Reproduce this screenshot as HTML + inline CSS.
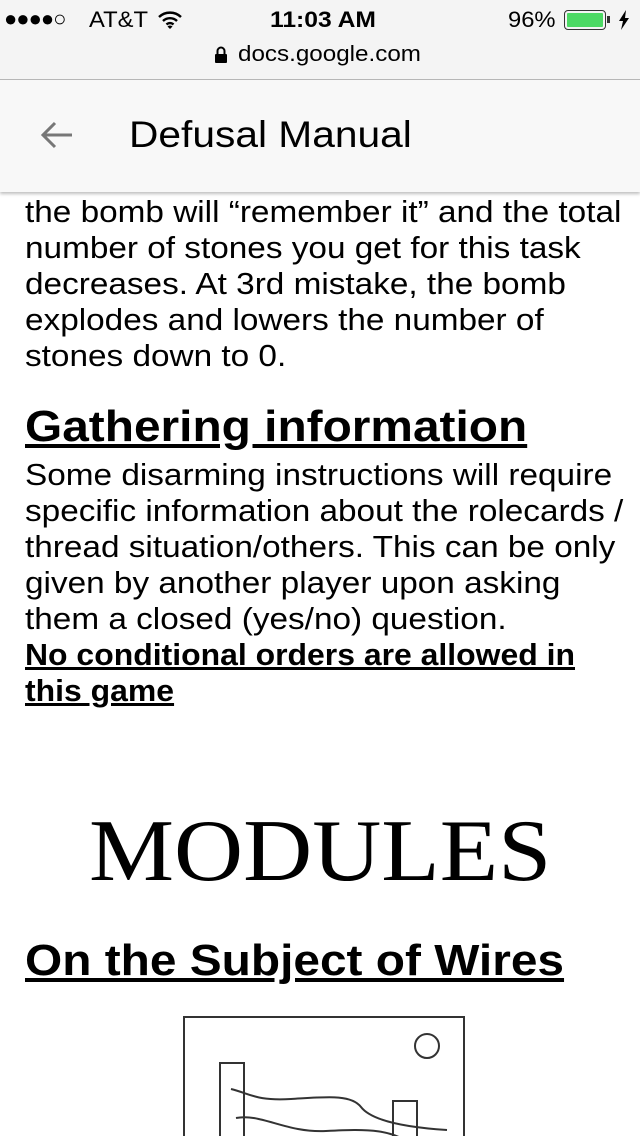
<!DOCTYPE html>
<html><head><meta charset="utf-8"><style>
*{margin:0;padding:0;box-sizing:border-box}
body{width:640px;height:1136px;overflow:hidden;background:#fff;font-family:"Liberation Sans",sans-serif;color:#000;position:relative}
.sb{position:absolute;left:0;top:0;width:640px;height:80px;background:#f4f4f4;border-bottom:1px solid #b8b8b8}
.hd{position:absolute;left:0;top:80px;width:640px;height:112px;background:#f8f8f8;box-shadow:0 2px 3px rgba(0,0,0,.25);z-index:2}
.t{position:absolute;white-space:nowrap;transform-origin:0 0}
.p{position:absolute;left:25px;font-size:31px;line-height:36px;white-space:nowrap;transform:scaleX(1.075);transform-origin:0 0}
.b{position:absolute;left:25px;font-size:31px;line-height:36px;white-space:nowrap;font-weight:bold;text-decoration:underline;transform:scaleX(1.03);transform-origin:0 0}
</style></head><body>
<div class="sb">
<div class="t" style="left:4px;top:6px;font-size:22px;letter-spacing:-1px">●●●●○</div>
<div class="t" style="left:89px;top:7px;font-size:22px;transform:scaleX(1.08)">AT&amp;T</div>
<svg class="t" style="left:157px;top:10px" width="26" height="20" viewBox="0 0 26 20"><path d="M2 7a16 16 0 0 1 22 0M6 11a10 10 0 0 1 14 0M9.5 14.5a5 5 0 0 1 7 0" stroke="#000" stroke-width="2.4" fill="none"/><path d="M13 19l-2.5-2.5a3.5 3.5 0 0 1 5 0z" fill="#000"/></svg>
<div class="t" style="left:270px;top:7px;font-size:22px;font-weight:bold;transform:scaleX(1.12)">11:03 AM</div>
<div class="t" style="left:508px;top:7px;font-size:22px;transform:scaleX(1.08)">96%</div>
<div class="t" style="left:564px;top:10px;width:42px;height:20px;border:1.5px solid #333;border-radius:4px;padding:2px"><div style="width:100%;height:100%;background:#4cd964;border-radius:1px"></div></div>
<div class="t" style="left:607px;top:16px;width:3px;height:7px;background:#333"></div>
<svg class="t" style="left:617px;top:10px" width="14" height="20"><path d="M9 0L2 11h4l-2 9 8-12H8z" fill="#000"/></svg>
<svg class="t" style="left:214px;top:46px" width="14" height="18"><path d="M3.5 8V5a3.5 3.5 0 0 1 7 0v3" stroke="#000" stroke-width="2" fill="none"/><rect x="1" y="8" width="12" height="9" rx="1" fill="#000"/></svg>
<div class="t" style="left:238px;top:41px;font-size:22px;transform:scaleX(1.1)">docs.google.com</div>
</div>
<div class="hd">
<svg class="t" style="left:38px;top:40px" width="36" height="30"><path d="M34 15H5M17 3L5 15l12 12" stroke="#777" stroke-width="3" fill="none"/></svg>
<div class="t" style="left:129px;top:34px;font-size:37px;transform:scaleX(1.1)">Defusal Manual</div>
</div>
<div class="p" style="top:194px">the bomb will “remember it” and the total<br>number of stones you get for this task<br>decreases. At 3rd mistake, the bomb<br>explodes and lowers the number of<br>stones down to 0.</div>
<div class="t" style="left:25px;top:402px;font-size:44px;font-weight:bold;text-decoration:underline;transform:scaleX(1.087)">Gathering information</div>
<div class="p" style="top:457px">Some disarming instructions will require<br>specific information about the rolecards /<br>thread situation/others. This can be only<br>given by another player upon asking<br>them a closed (yes/no) question.</div>
<div class="b" style="top:637px">No conditional orders are allowed in<br>this game</div>
<div class="t" style="left:0;width:640px;text-align:center;top:802px;font-family:'Liberation Serif',serif;font-size:88px;line-height:100px;transform:scaleX(1.087);transform-origin:318px 0">MODULES</div>
<div class="t" style="left:25px;top:936px;font-size:44px;font-weight:bold;text-decoration:underline;transform:scaleX(1.087)">On the Subject of Wires</div>
<svg class="t" style="left:0;top:1000px" width="640" height="136"><g fill="none" stroke="#333" stroke-width="2"><rect x="184" y="17" width="280" height="150"/><circle cx="427" cy="46" r="12"/><rect x="220" y="63" width="24" height="100"/><rect x="393" y="101" width="24" height="60"/><path d="M231 89c20 5 25 12 60 10s60-5 70 8 40 20 86 23M236 118c25-5 50 15 90 13s70-3 90 18"/></g></svg>
</body></html>
